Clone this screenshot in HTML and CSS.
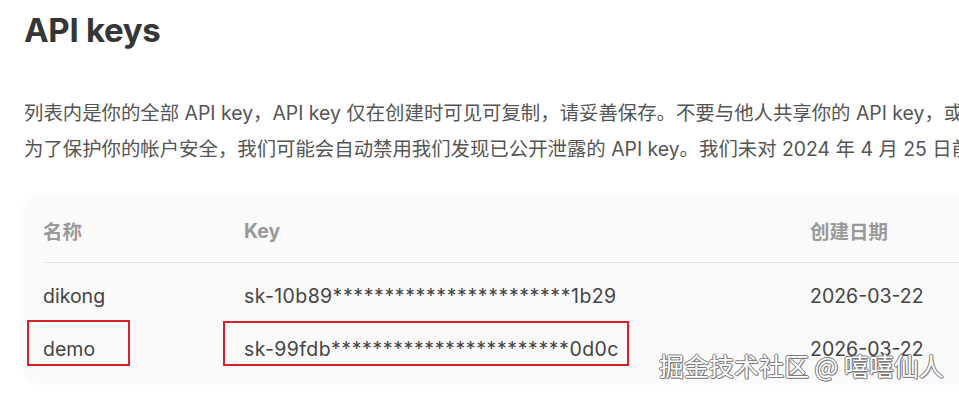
FILE: index.html
```html
<!DOCTYPE html>
<html lang="zh-CN">
<head>
<meta charset="utf-8">
<title>API keys</title>
<link rel="stylesheet" href="styles.css">
</head>
<body>
<main class="page">
  <h1 class="title">API keys</h1>
  <p class="desc">列表内是你的全部 API key，API key 仅在创建时可见可复制，请妥善保存。不要与他人共享你的 API key，或将其暴露在浏览器或其他客户端代码中。<br>为了保护你的帐户安全，我们可能会自动禁用我们发现已公开泄露的 API key。我们未对 2024 年 4 月 25 日前创建的 API key 的使用情况进行追踪。</p>
  <section class="card">
    <div class="row head">
      <div class="cell">名称</div>
      <div class="cell">Key</div>
      <div class="cell">创建日期</div>
    </div>
    <div class="row">
      <div class="cell">dikong</div>
      <div class="cell key">sk-10b89<span class="stars">***********************</span>1b29</div>
      <div class="cell">2026-03-22</div>
    </div>
    <div class="row">
      <div class="cell mark mark-name">demo</div>
      <div class="cell key mark mark-key">sk-99fdb<span class="stars">***********************</span>0d0c</div>
      <div class="cell">2026-03-22</div>
    </div>
  </section>
  <div class="watermark">掘金技术社区 @ 嘻嘻仙人</div>
</main>
</body>
</html>
```

FILE: styles.css
```css
html, body {
  margin: 0;
  padding: 0;
  overflow: hidden;
  background: #ffffff;
}
body {
  width: 959px;
  height: 396px;
  font-family: Inter, "Noto Sans CJK SC", sans-serif;
  color: #444;
}
.page {
  position: relative;
  width: 1300px;
  height: 396px;
  padding-left: 24px;
  box-sizing: border-box;
}
.title {
  margin: 0;
  padding-top: 8px;
  font-size: 33px;
  line-height: 44px;
  font-weight: 700;
  color: #363636;
  letter-spacing: -0.3px;
}
.desc {
  margin: 43px 0 0 0;
  font-size: 19.4px;
  line-height: 36px;
  color: #555;
  white-space: nowrap;
}
.card {
  margin-top: 30px;
  margin-left: 1px;
  width: 1200px;
  background: #fafafa;
  border-radius: 12px;
  box-shadow: 0 1px 6px rgba(0,0,0,0.04);
  padding: 0 18px 6px 18px;
}
.row {
  display: grid;
  grid-template-columns: 201px 566px 1fr;
  height: 53px;
  align-items: center;
  font-size: 19.5px;
  color: #444;
}
.row.head {
  height: 66px;
  border-bottom: 1px solid #e3e3e3;
  margin-bottom: 6px;
  font-weight: 700;
  color: #999;
  padding-top: 2px;
  box-sizing: border-box;
}
.cell {
  white-space: nowrap;
}
.key {
  letter-spacing: 0.4px;
}
.stars {
  letter-spacing: 0.6px;
}
.mark {
  position: relative;
}
.mark::before {
  content: "";
  position: absolute;
  border: 2px solid #d8222b;
  box-sizing: border-box;
}
.mark-name::before {
  left: -16px;
  top: -17px;
  width: 103px;
  height: 46px;
}
.mark-key::before {
  left: -21px;
  top: -16px;
  width: 406px;
  height: 45px;
}
.watermark {
  position: absolute;
  left: 659px;
  top: 348px;
  font-size: 25px;
  line-height: 34px;
  color: #ffffff;
  font-family: "Noto Sans CJK SC", sans-serif;
  text-shadow: -1px 0 #7a7a7a, 1px 0 #7a7a7a, 0 -1px #7a7a7a, 0 1px #7a7a7a, 1px 1px #999;
  white-space: nowrap;
}
```
